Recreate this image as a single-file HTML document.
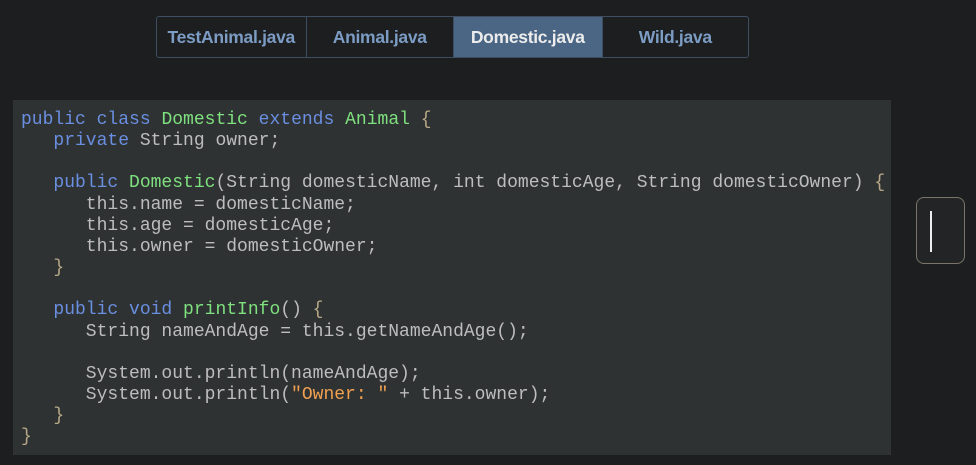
<!DOCTYPE html>
<html><head><style>
body{margin:0;width:976px;height:465px;background:#1c1e20;overflow:hidden;position:relative;font-family:"Liberation Sans",sans-serif}
.tabs{position:absolute;left:156px;top:16px;width:593px;height:42px;border:1px solid #3e4e60;border-radius:3px;display:flex;box-sizing:border-box;overflow:hidden}
.tab{height:100%;display:flex;align-items:center;justify-content:center;font-weight:bold;font-size:17.5px;color:#7c9cc4;box-sizing:border-box;letter-spacing:-0.3px}
.tab+.tab{border-left:1px solid #3e4e60}
.act{background:#4a6684;color:#ececec}
pre{position:absolute;left:13px;top:100px;width:878px;height:355px;margin:0;background:#2e3233;box-sizing:border-box;padding:10px 0 0 8px;font-family:"Liberation Mono",monospace;font-size:18px;line-height:21.15px;color:#bdbdbd}
.k{color:#6a8ee0}.c{color:#7ee07e}.b{color:#b8a888}.s{color:#f0a050}
.sb{position:absolute;left:916px;top:197px;width:49px;height:67px;border:1px solid #7a746a;border-radius:8px;box-sizing:border-box;background:#222426}
.sb:after{content:"";position:absolute;left:13px;top:13px;width:2px;height:41px;background:#eee}
</style></head><body>
<div class="tabs">
<div class="tab" style="width:149px">TestAnimal.java</div>
<div class="tab" style="width:148px">Animal.java</div>
<div class="tab act" style="width:149px">Domestic.java</div>
<div class="tab" style="width:147px">Wild.java</div>
</div>
<pre><span class="k">public class</span> <span class="c">Domestic</span> <span class="k">extends</span> <span class="c">Animal</span> <span class="b">{</span>
   <span class="k">private</span> String owner;

   <span class="k">public</span> <span class="c">Domestic</span>(String domesticName, int domesticAge, String domesticOwner) <span class="b">{</span>
      this.name = domesticName;
      this.age = domesticAge;
      this.owner = domesticOwner;
   <span class="b">}</span>

   <span class="k">public void</span> <span class="c">printInfo</span>() <span class="b">{</span>
      String nameAndAge = this.getNameAndAge();

      System.out.println(nameAndAge);
      System.out.println(<span class="s">"Owner: "</span> + this.owner);
   <span class="b">}</span>
<span class="b">}</span></pre>
<div class="sb"></div>
</body></html>
